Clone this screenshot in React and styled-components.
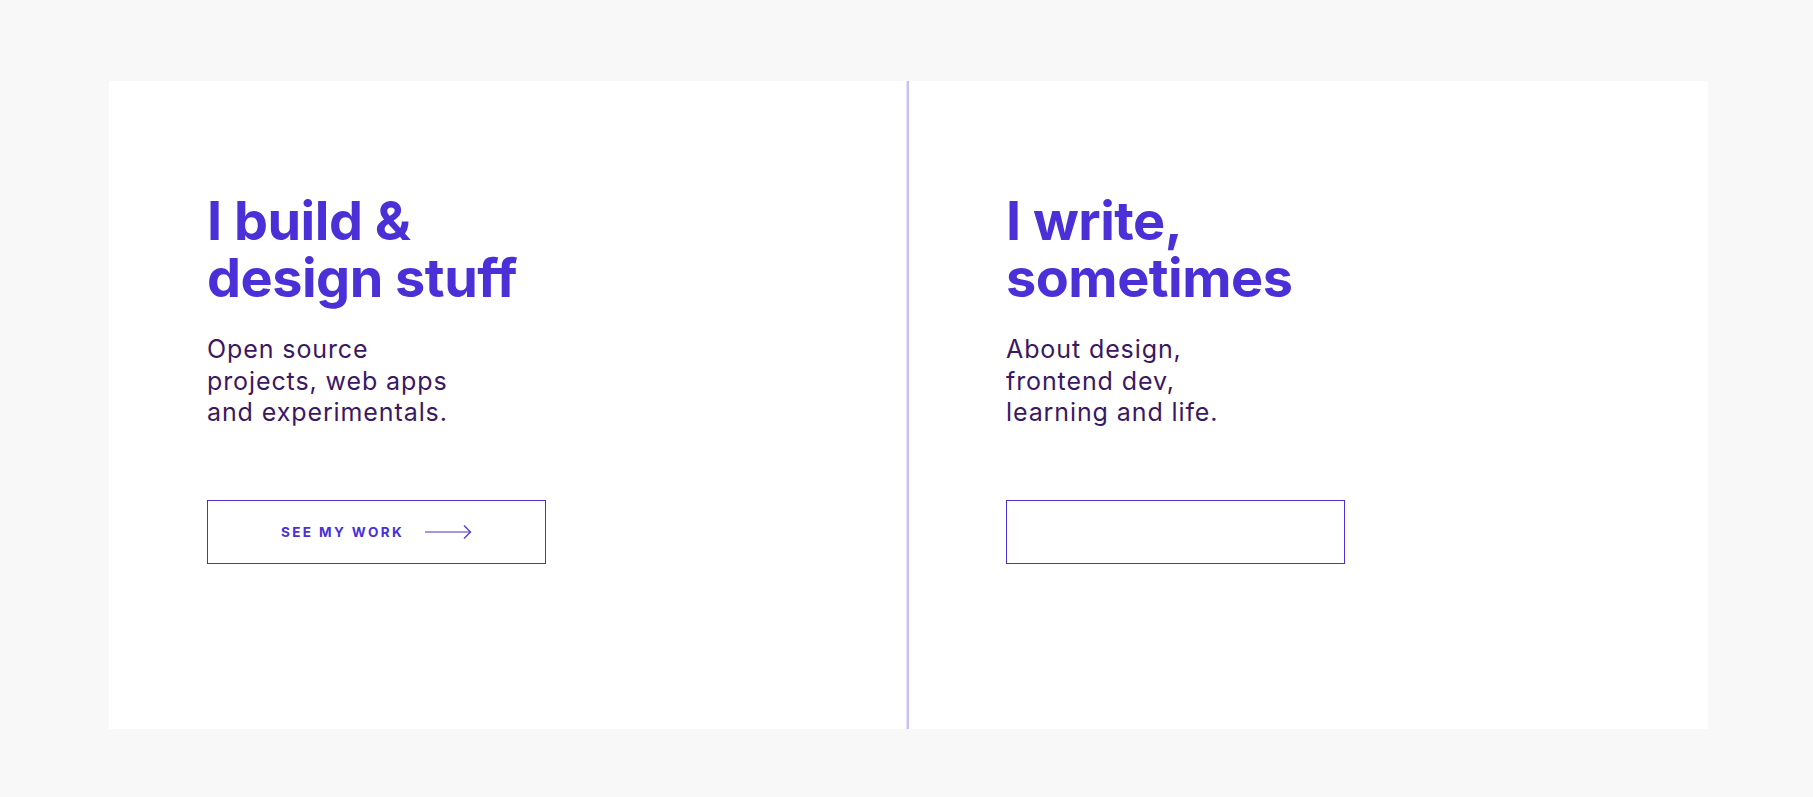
import React from "react";
import styled, { createGlobalStyle } from "styled-components";

const Global = createGlobalStyle`
  html, body { margin: 0; padding: 0; background: #f8f8f8; }
  body { font-family: Inter, "Noto Sans", sans-serif; -webkit-font-smoothing: antialiased; }
`;

const Page = styled.main`
  min-height: 797px;
  padding: 81px 0 0 109px;
  box-sizing: border-box;
`;

const Card = styled.section`
  width: 1599px;
  height: 648px;
  background: #ffffff;
  display: grid;
  grid-template-columns: 798px 2px 1fr;
`;

const Divider = styled.div`
  background: #c9c1f4;
  box-shadow: -1px 0 0 #e6e2fa;
`;

const Column = styled.div`
  display: flex;
  flex-direction: column;
  align-items: flex-start;
  padding: 111px 0 0 ${(p) => p.$pad}px;
`;

const Heading = styled.h2`
  margin: 0;
  font-family: Inter, sans-serif;
  font-weight: 700;
  font-size: 54px;
  line-height: 57px;
  letter-spacing: -0.5px;
  color: #4a30d6;
`;

const Text = styled.p`
  margin: 28px 0 0;
  font-family: Inter, sans-serif;
  font-weight: 400;
  font-size: 25px;
  line-height: 31.5px;
  letter-spacing: 0.9px;
  color: #3a1862;
`;

const Button = styled.a`
  margin-top: 71px;
  width: 339px;
  height: 64px;
  box-sizing: border-box;
  border: 1px solid #4a30d6;
  display: flex;
  align-items: center;
  justify-content: center;
  gap: 21px;
  text-decoration: none;
  cursor: pointer;
`;

const Label = styled.span`
  font-family: Inter, sans-serif;
  font-weight: 700;
  font-size: 13.5px;
  letter-spacing: 2.4px;
  color: #4a30d6;
  text-transform: uppercase;
`;

const Arrow = () => (
  <svg width="47" height="16" viewBox="0 0 47 16" fill="none">
    <path d="M0 8H45.5" stroke="#4a30d6" strokeWidth="1.2" />
    <path d="M39 1.5L45.5 8L39 14.5" stroke="#4a30d6" strokeWidth="1.2" />
  </svg>
);

export default function App() {
  return (
    <>
      <Global />
      <Page>
        <Card>
          <Column $pad={98}>
            <Heading>
              I build &amp;
              <br />
              design stuff
            </Heading>
            <Text>
              Open source
              <br />
              projects, web apps
              <br />
              and experimentals.
            </Text>
            <Button>
              <Label>See my work</Label>
              <Arrow />
            </Button>
          </Column>
          <Divider />
          <Column $pad={97}>
            <Heading>
              I write,
              <br />
              sometimes
            </Heading>
            <Text>
              About design,
              <br />
              frontend dev,
              <br />
              learning and life.
            </Text>
            <Button />
          </Column>
        </Card>
      </Page>
    </>
  );
}
